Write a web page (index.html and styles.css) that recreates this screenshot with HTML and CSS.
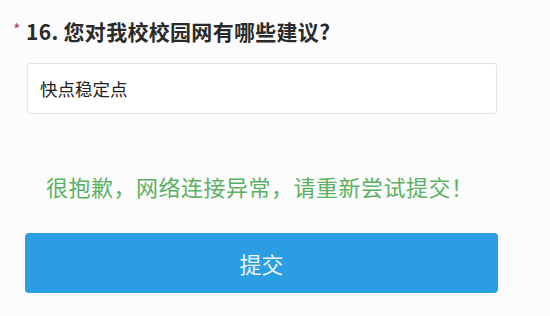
FILE: index.html
```html
<!DOCTYPE html>
<html lang="zh-CN">
<head>
    <meta charset="UTF-8">
    <meta name="viewport" content="width=device-width, initial-scale=1.0">
    <title>问卷</title>
    <link rel="stylesheet" href="styles.css">
</head>
<body>
    <div class="question">
        <div class="q-title">
            <span class="required">*</span>
            <span>16. 您对我校校园网有哪些建议?</span>
        </div>
        <div class="answer">快点稳定点</div>
    </div>

    <!-- 提示信息 -->
    <div class="msg">很抱歉，网络连接异常，请重新尝试提交！</div>

    <div class="btn-wrap">
        <button class="submit-btn">提交</button>
    </div>
</body>
</html>
```

FILE: styles.css
```css
* {
    margin: 0;
    padding: 0;
    box-sizing: border-box;
}

body {
    font-family: 'Noto Sans CJK SC', 'Liberation Sans', sans-serif;
    background: #fcfcfc;
    width: 550px;
    height: 316px;
    overflow: hidden;
}

.question {
    padding: 17px 53px 0 27px;
}

.q-title {
    display: flex;
    align-items: center;
    gap: 3px;
    font-size: 21px;
    font-weight: bold;
    color: #2a2a2a;
    height: 28px;
    margin-left: -14px;
    letter-spacing: 0.3px;
}

.required {
    color: #b5445c;
    font-size: 16px;
    font-weight: normal;
    width: 10px;
    margin-top: -4px;
}

.answer {
    margin-top: 18px;
    height: 51px;
    background: #fff;
    border: 1px solid #e4e4e4;
    border-radius: 3px;
    padding: 0 12px;
    font-size: 17.5px;
    color: #222;
    line-height: 49px;
}

.msg {
    margin-top: 57px;
    padding-left: 46px;
    font-size: 22px;
    line-height: 30px;
    color: #5bb162;
    letter-spacing: 0.5px;
}

.btn-wrap {
    padding: 32px 52px 0 25px;
}

.submit-btn {
    width: 100%;
    height: 60px;
    border: none;
    border-radius: 4px;
    background: #2b9de2;
    color: #eef6fc;
    font-family: inherit;
    font-size: 22px;
}
```
